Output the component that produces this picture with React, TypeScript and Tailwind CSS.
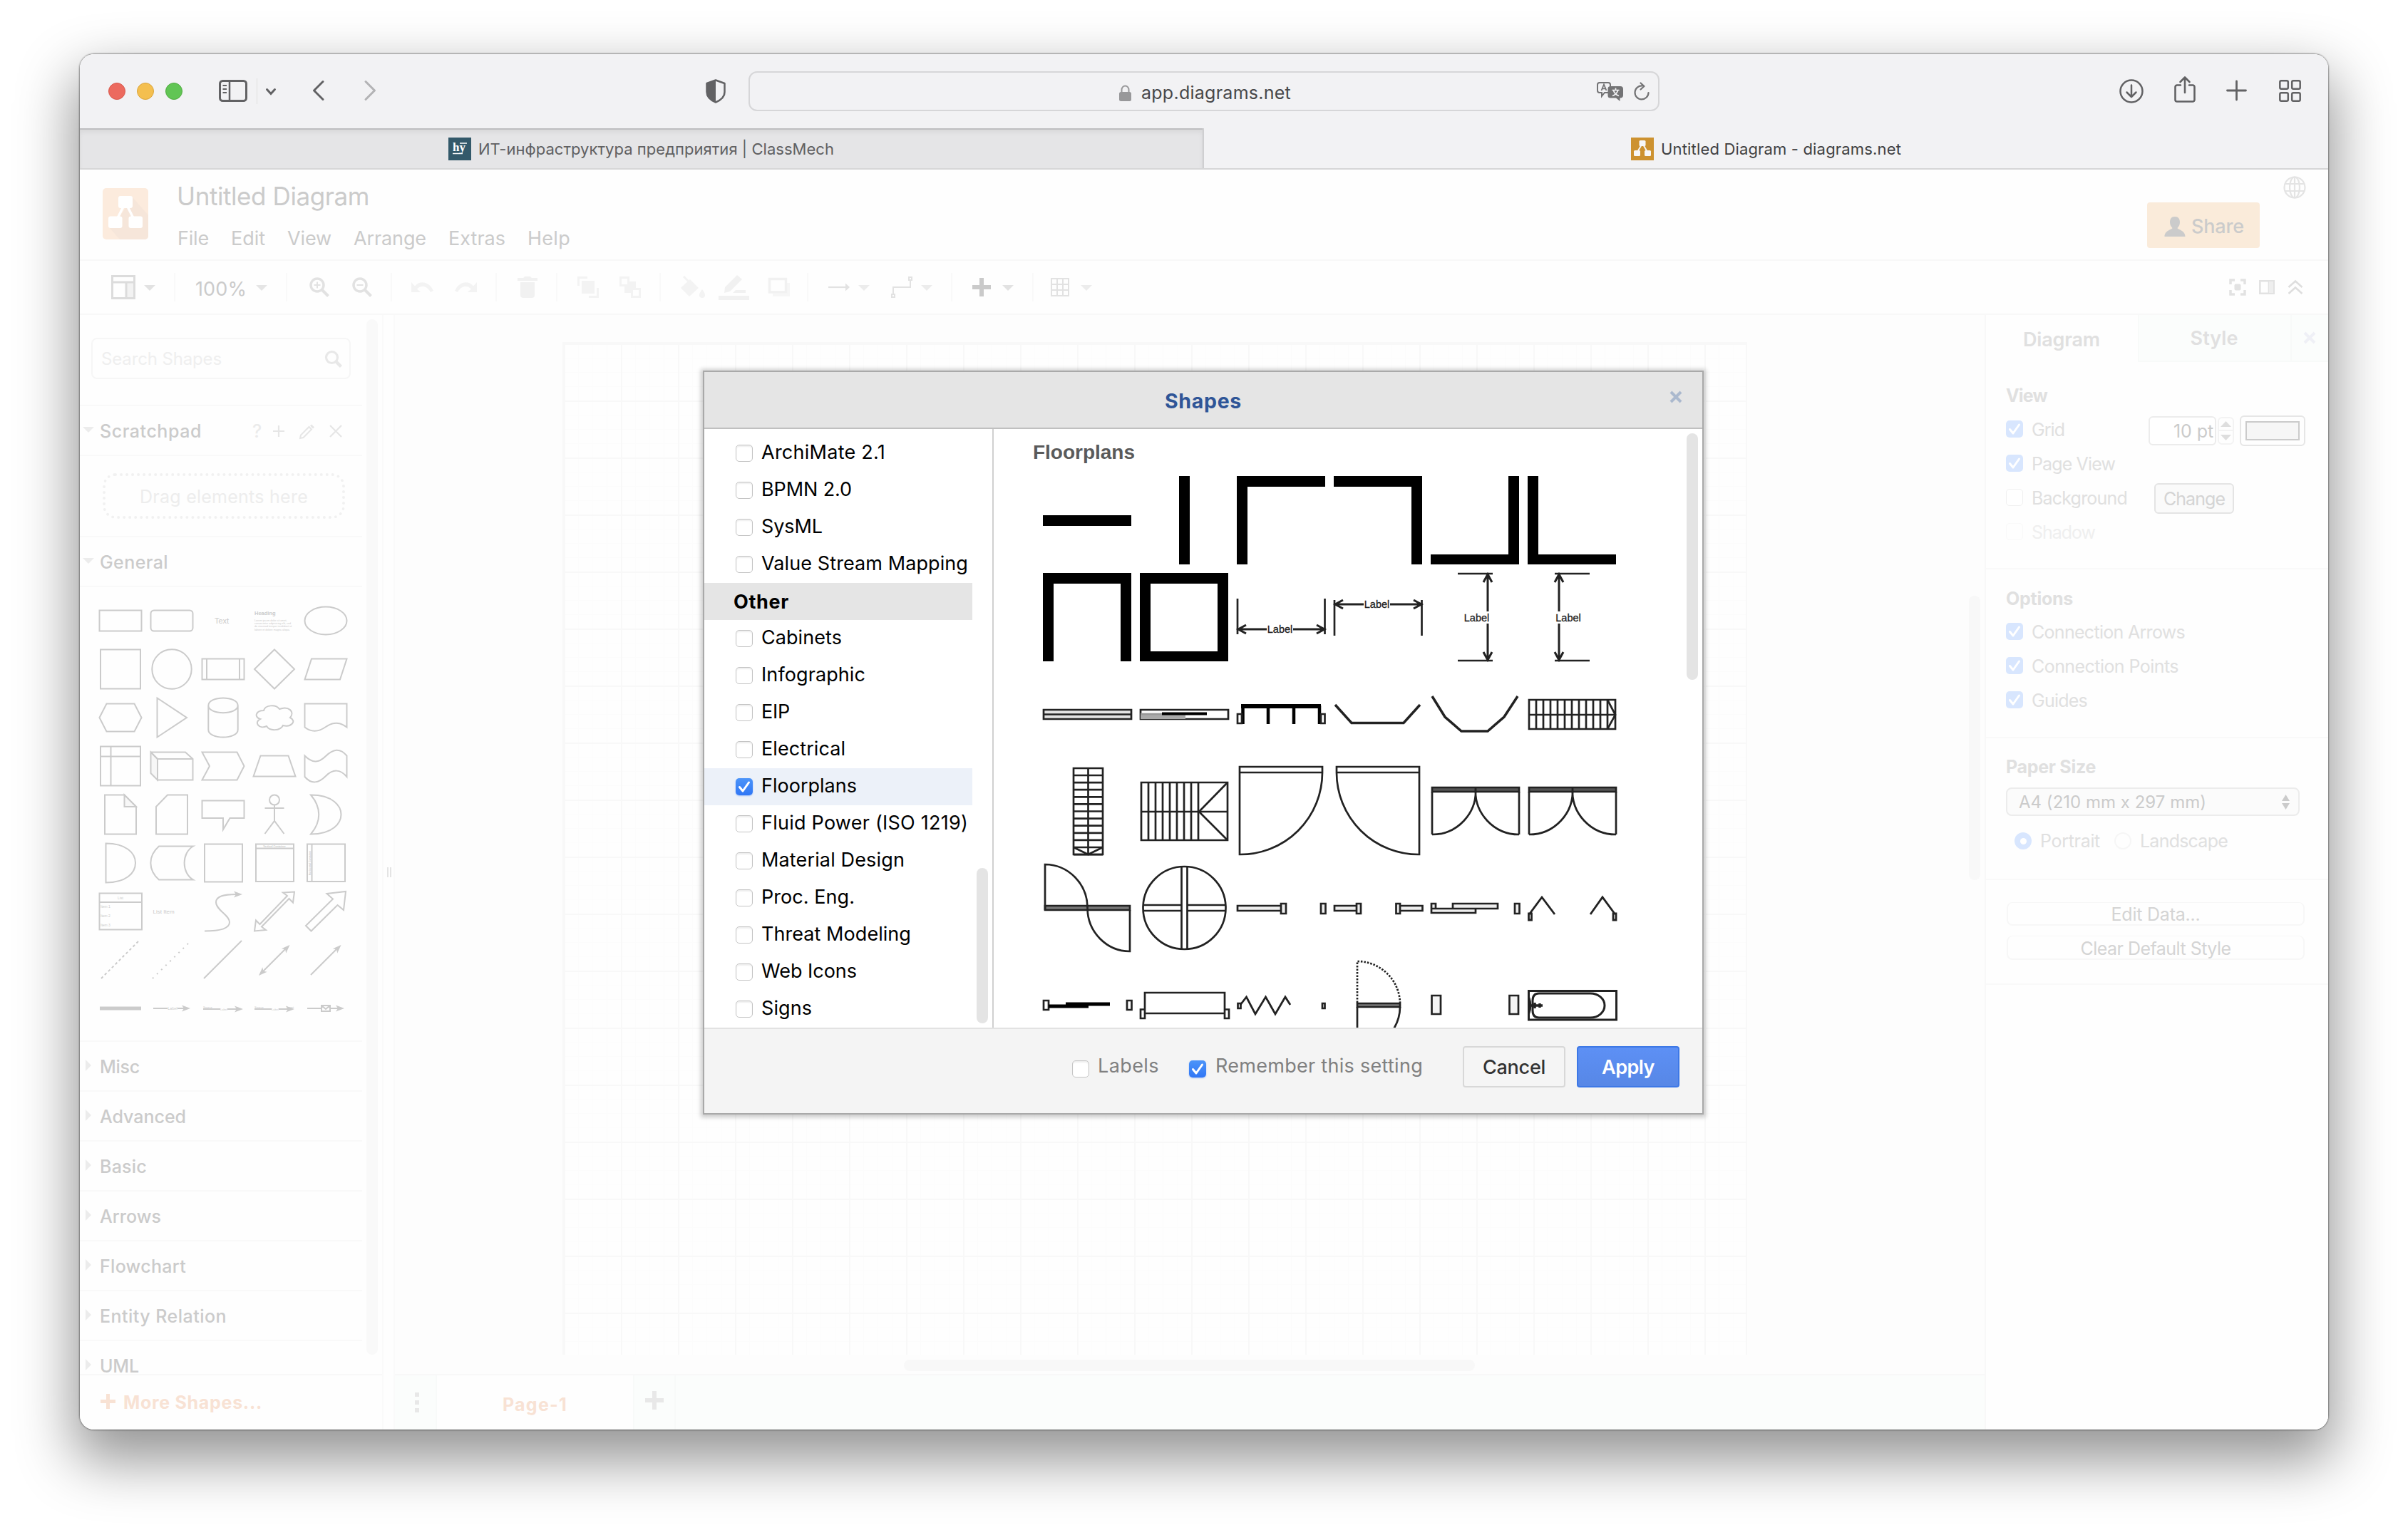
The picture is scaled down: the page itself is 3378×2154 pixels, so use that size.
import { useLayoutEffect, useRef, useState, type ReactNode } from "react";
import clsx from "clsx";

/* Text run whose tracking is adjusted so that it spans `w` pixels. */
function T({ w, className, children }: { w?: number; className?: string; children: string }) {
  const ref = useRef<HTMLSpanElement>(null);
  const [ls, setLs] = useState<number | undefined>(undefined);
  useLayoutEffect(() => {
    if (!ref.current || !w) return;
    const natural = ref.current.getBoundingClientRect().width;
    setLs((w - natural) / children.length);
  }, [w, children]);
  return (
    <span
      ref={ref}
      className={clsx("inline-block whitespace-pre", className)}
      style={ls === undefined ? undefined : { letterSpacing: `${ls}px` }}
    >
      {children}
    </span>
  );
}

function Ico({ w, h, className, children }: { w: number; h: number; className?: string; children: ReactNode }) {
  return (
    <svg
      width={w}
      height={h}
      viewBox={`0 0 ${w} ${h}`}
      className={clsx("shrink-0 overflow-visible", className)}
      fill="none"
      stroke="currentColor"
    >
      {children}
    </svg>
  );
}

function Check({ on, faded, dim, className }: { on?: boolean; faded?: boolean; dim?: boolean; className?: string }) {
  return (
    <span
      className={clsx(
        "flex size-6 shrink-0 items-center justify-center rounded-[5px]",
        on && !faded && "bg-linear-to-b from-[#4c94f9] to-[#3076f5] shadow-[0_1px_2px_rgba(48,118,245,0.4)]",
        on && faded && "bg-[#d8e6fe]",
        !on && !faded && "border border-[#c4c4c4] bg-white shadow-[inset_0_2px_2px_rgba(0,0,0,0.07)]",
        !on && faded && !dim && "border border-[#f0f0f0] bg-white",
        !on && faded && dim && "border border-[#f9f9f9]",
        className,
      )}
    >
      {on && (
        <Ico w={24} h={24} className="text-white">
          <path d="M5.5 12.5 L10 18 L18.5 6" strokeWidth="3" strokeLinecap="round" strokeLinejoin="round" />
        </Ico>
      )}
    </span>
  );
}

/* ---------- Safari chrome ---------- */

function BrowserToolbar() {
  return (
    <div className="flex h-[104px] shrink-0 items-center bg-[#f2f2f4] text-[#626264]">
      <div className="ml-10 flex gap-4">
        <span className="size-6 rounded-full border border-[#d8584b] bg-[#ec6a5e]" />
        <span className="size-6 rounded-full border border-[#dba53c] bg-[#f4bf4f]" />
        <span className="size-6 rounded-full border border-[#51ab41] bg-[#61c554]" />
      </div>
      <Ico w={40} h={31} className="mb-0.5 ml-[51px]">
        <rect x="1.5" y="1.5" width="37" height="28" rx="4" strokeWidth="3" />
        <path d="M15 2V29" strokeWidth="2.5" />
        <path d="M5.5 8H11M5.5 13H11M5.5 18H11" strokeWidth="2" />
      </Ico>
      <span className="ml-[13px] h-9 w-px bg-[#dededf]" />
      <Ico w={14} h={9} className="ml-3">
        <path d="M1.5 1.5L7 7.5L12.5 1.5" strokeWidth="3" strokeLinecap="round" />
      </Ico>
      <Ico w={17} h={28} className="mb-0.5 ml-[51px]">
        <path d="M15 1.5L2.5 14L15 26.5" strokeWidth="3" strokeLinecap="round" strokeLinejoin="round" />
      </Ico>
      <Ico w={17} h={28} className="mb-0.5 ml-[56px] text-[#b3b3b5]">
        <path d="M2 1.5L14.5 14L2 26.5" strokeWidth="3" strokeLinecap="round" strokeLinejoin="round" />
      </Ico>
      <Ico w={28} h={34} className="ml-[462px]">
        <path d="M14 1.5L26.5 6V18C26.5 25 20 30 14 32.5C8 30 1.5 25 1.5 18V6Z" strokeWidth="2.5" strokeLinejoin="round" />
        <path d="M14 1V33C7 30 1 25 1 18V6Z" fill="currentColor" stroke="none" />
      </Ico>
      <div className="ml-8 flex h-14 w-[1278px] items-center rounded-xl border-2 border-[#d6d6d8]">
        <Ico w={17} h={23} className="ml-[518px] mt-1 text-[#98989a]">
          <rect x="0" y="10" width="17" height="13" rx="2.5" fill="currentColor" stroke="none" />
          <path d="M3.5 11V7a5 5.5 0 0 1 10 0v4" strokeWidth="2" />
        </Ico>
        <div className="ml-[14px] w-[209px] pt-[3px] text-[25px] leading-8 text-[#48484a]">
          <T w={210}>app.diagrams.net</T>
        </div>
        <Ico w={37} h={27} className="ml-[430px] text-[#737375]">
          <path d="M4 1H16a3 3 0 0 1 3 3v2M16 15H11l-4 5v-5H4a3 3 0 0 1-3-3V4a3 3 0 0 1 3-3" strokeWidth="2" />
          <path d="M6.5 12L10 3.5L13.5 12M7.8 9.3H12.2" strokeWidth="1.8" />
          <path d="M19 6H33a4 4 0 0 1 4 4v8.500a4 4 0 0 1-4 4H32.500V27L27 22.500H19a3.500 3.500 0 0 1-3.500-3.500V9.500A3.500 3.500 0 0 1 19 6Z" fill="currentColor" stroke="none" />
          <path d="M26.500 8.500V11M21.500 11.500H31.500M23.500 12C24.500 15.500 27 18 31 19.500M29.500 12C28.500 15.500 26 18 22 19.500" stroke="#f2f2f4" strokeWidth="1.700" />
        </Ico>
        <Ico w={22} h={25} className="ml-[15px] text-[#737375]">
          <path d="M12 4.500A9.500 9.500 0 1 0 20.500 14" strokeWidth="2.200" strokeLinecap="round" />
          <path d="M9.500 0.500L14.500 5L9.500 9.500" strokeWidth="2.200" strokeLinecap="round" strokeLinejoin="round" />
        </Ico>
      </div>
      <Ico w={34} h={34} className="ml-[645px]">
        <circle cx="17" cy="17" r="15.500" strokeWidth="2.500" />
        <path d="M17 8.500V24.500M10.500 18.500L17 25L23.500 18.500" strokeWidth="2.500" strokeLinecap="round" strokeLinejoin="round" />
      </Ico>
      <Ico w={30} h={37} className="mb-[5px] ml-[43px]">
        <path d="M9 12.500H4a2.500 2.500 0 0 0-2.500 2.500V33A2.500 2.500 0 0 0 4 35.500H26A2.500 2.500 0 0 0 28.500 33V15A2.500 2.500 0 0 0 26 12.500H21" strokeWidth="2.600" strokeLinecap="round" />
        <path d="M15 23V2M8.500 8L15 1.500L21.500 8" strokeWidth="2.600" strokeLinecap="round" strokeLinejoin="round" />
      </Ico>
      <Ico w={27} h={28} className="mb-0.5 ml-[44px]">
        <path d="M13.500 1V27M0.500 14H26.500" strokeWidth="2.800" strokeLinecap="round" />
      </Ico>
      <Ico w={31} h={31} className="mb-0.5 ml-[46px]">
        <g strokeWidth="2.500">
          <rect x="1.300" y="1.300" width="11.500" height="11.500" rx="2" />
          <rect x="18.200" y="1.300" width="11.500" height="11.500" rx="2" />
          <rect x="1.300" y="18.200" width="11.500" height="11.500" rx="2" />
          <rect x="18.200" y="18.200" width="11.500" height="11.500" rx="2" />
        </g>
      </Ico>
    </div>
  );
}

function TabBar() {
  return (
    <div className="flex h-[58px] shrink-0 border-b-2 border-[#d6d6d7] bg-[#f2f2f4] text-[22px]">
      <div className="flex w-[1577px] items-center border-r-2 border-[#cfcfd1] bg-[#e5e5e7] pl-[517px] pt-0.5 text-[#606062] shadow-[inset_0_2px_1px_#bdbdbf,inset_0_6px_6px_rgba(0,0,0,0.05)]">
        <span className="flex size-8 items-center justify-center bg-[#33596a]">
          <Ico w={32} h={32} className="text-white">
            <path d="M16 8H26M6 22.500H20" strokeWidth="1.600" />
            <text x="6" y="19" fontSize="17" fontWeight="700" fill="currentColor" stroke="none" fontFamily="Liberation Serif, serif">hy</text>
          </Ico>
        </span>
        <T w={499} className="ml-[10px]">ИТ-инфраструктура предприятия | ClassMech</T>
      </div>
      <div className="flex items-center pl-[599px] pt-0.5 text-[#3f3f41]">
        <Ico w={32} h={32}>
          <rect width="32" height="32" fill="#cd9230" stroke="none" />
          <path d="M16 8L8 22M16 8L24 22" stroke="#f4f4f4" strokeWidth="2" />
          <g fill="#f7f7f7" stroke="none">
            <rect x="11.500" y="4" width="9" height="8" rx="1.500" />
            <rect x="4" y="18" width="9" height="8" rx="1.500" />
            <rect x="19" y="18" width="9" height="8" rx="1.500" />
          </g>
        </Ico>
        <T w={337} className="ml-[10px]">Untitled Diagram - diagrams.net</T>
      </div>
    </div>
  );
}

/* ---------- diagrams.net header ---------- */

const menus: [string, number][] = [["File", 44], ["Edit", 48], ["View", 62], ["Arrange", 102], ["Extras", 80], ["Help", 60]];

function AppHeader() {
  return (
    <div className="flex h-[128px] shrink-0 border-b-2 border-[#f8f8f8] text-[#cbcbcb]">
      <Ico w={64} h={72} className="ml-8 mt-[26px]">
        <rect width="64" height="72" rx="5" fill="#fcebdd" stroke="none" />
        <path d="M42 13L64 38V67a5 5 0 0 1-5 5H24L10 56L24 40Z" fill="#f6e6da" stroke="none" />
        <path d="M32 20L18 48M32 20L46 48" stroke="#fff" strokeWidth="3.500" />
        <g fill="#fff" stroke="none">
          <rect x="22" y="11" width="20" height="17" rx="3" />
          <rect x="8" y="39.500" width="19.500" height="16.500" rx="3" />
          <rect x="36.500" y="39.500" width="19.500" height="16.500" rx="3" />
        </g>
      </Ico>
      <div className="ml-10 mt-[15px] flex-1">
        <div className="text-[35px] leading-[44px]"><T w={270}>Untitled Diagram</T></div>
        <div className="mt-[18px] flex gap-[31px] pl-px text-[27px] leading-10">
          {menus.map(([m, w]) => (
            <div key={m} className="shrink-0"><T w={w}>{m}</T></div>
          ))}
        </div>
      </div>
      <div className="mr-[33px] mt-[46px] flex h-16 w-[158px] items-center rounded-[4px] bg-[#faebda] pl-6 pt-[3px] text-[27px] font-medium">
        <Ico w={30} h={28}>
          <path d="M15 0c5 0 7 3.500 7 8 0 3-1.500 6-3.500 8 0 2 11 3 11 12H.5C.5 19 11.500 18 11.500 16 9.500 14 8 11 8 8 8 3.500 10 0 15 0Z" fill="currentColor" stroke="none" />
        </Ico>
        <T w={74} className="ml-[8px]">Share</T>
      </div>
      <Ico w={32} h={32} className="mr-[31px] mt-[9px] text-[#e4e4e4]">
        <g strokeWidth="2.200">
          <circle cx="16" cy="16" r="14.500" />
          <ellipse cx="16" cy="16" rx="7" ry="14.500" />
          <path d="M16 1.500V30.500M3 11H29M3 21H29" />
        </g>
      </Ico>
    </div>
  );
}

function Caret({ className }: { className?: string }) {
  return (
    <Ico w={16} h={8} className={clsx("mt-0.5", className)}>
      <path d="M0 0H16L8 8Z" fill="currentColor" stroke="none" />
    </Ico>
  );
}
const Sep = ({ className }: { className?: string }) => <span className={clsx("h-10 w-0.5 shrink-0 bg-[#f9f9f9]", className)} />;

function AppToolbar() {
  return (
    <div className="flex h-[76px] shrink-0 items-center border-b-2 border-[#f8f8f8] text-[#e2e2e2]">
      <Ico w={34} h={34} className="ml-11 text-[#dcdcdc]">
        <rect x="21" y="10" width="12" height="23" fill="#f2f2f2" stroke="none" />
        <path d="M1.500 1.500H32.500V32.500H1.500ZM1 10H33M21 10V33" strokeWidth="3" />
      </Ico>
      <Caret className="ml-3" />
      <Sep className="ml-[26px]" />
      <div className="ml-[28px] mt-[5px] text-[27px] text-[#cbcbcb]"><T w={72}>100%</T></div>
      <Caret className="ml-[13px] text-[#e5e5e5]" />
      <Sep className="ml-[26px]" />
      {[true, false].map((plus) => (
        <Ico key={String(plus)} w={28} h={28} className={plus ? "ml-[31px]" : "ml-8"}>
          <circle cx="11" cy="11" r="9" strokeWidth="3.500" />
          <path d="M17.500 17.500L26.500 26.500" strokeWidth="4" />
          <path d={plus ? "M11 6.500V15.500M6.500 11H15.500" : "M6.500 11H15.500"} strokeWidth="2" />
        </Ico>
      ))}
      <Sep className="ml-[26px]" />
      <Ico w={31} h={14} className="ml-[27px] text-[#f3f3f3]">
        <path d="M0 0V14H13L8 9.500C14 4 22 5 27 14L31 12C25 -1 12 -3 5 5.500Z" fill="currentColor" stroke="none" />
      </Ico>
      <Ico w={31} h={14} className="ml-[30px] text-[#f3f3f3]">
        <path d="M31 0V14H18L23 9.500C17 4 9 5 4 14L0 12C6 -1 19 -3 26 5.500Z" fill="currentColor" stroke="none" />
      </Ico>
      <Sep className="ml-[26px]" />
      <Ico w={28} h={30} className="ml-[29px] text-[#f1f1f1]">
        <path d="M0 2H8L10 0H18L20 2H28V6H0ZM4 8H24V26a4 4 0 0 1-4 4H8a4 4 0 0 1-4-4Z" fill="currentColor" stroke="none" />
      </Ico>
      <Sep className="ml-[26px]" />
      <Ico w={30} h={30} className="ml-7 text-[#f3f3f3]">
        <path d="M6 6H24V24H6Z" fill="currentColor" stroke="none" />
        <path d="M14 1.500H1.500V13M16 28.500H28.500V16" strokeWidth="3" />
      </Ico>
      <Ico w={30} h={30} className="ml-[29px] text-[#f3f3f3]">
        <path d="M14 7H23V16H14ZM7 13H16V23H7Z" fill="currentColor" stroke="none" />
        <path d="M1.500 1.500H12.500V12.500H1.500ZM17.500 17.500H28.500V28.500H17.500Z" strokeWidth="3" />
      </Ico>
      <Sep className="ml-[26px]" />
      <Ico w={34} h={30} className="ml-7 text-[#f3f3f3]">
        <path d="M13 4L25 16L12 28L0 16ZM30 18c3 4 4 6 4 8a4 4 0 0 1-8 0c0-2 1-4 4-8Z" fill="currentColor" stroke="none" />
        <path d="M4 0L15 11" strokeWidth="3" />
      </Ico>
      <Ico w={43} h={36} className="ml-[19px] text-[#f1f1f1]">
        <path d="M9 18L26 1L33 7L16 24L8 26ZM0 30H43V36H0ZM24 22H38V26H20Z" fill="currentColor" stroke="none" />
      </Ico>
      <Ico w={30} h={26} className="ml-[27px] text-[#f1f1f1]">
        <path d="M26 7V22H6V26H30V7Z" fill="#f6f6f6" stroke="none" />
        <path d="M1.500 1.500H24.500V20H1.500Z" strokeWidth="3.500" />
      </Ico>
      <Sep className="ml-6" />
      <Ico w={30} h={12} className="ml-[28px]">
        <path d="M0 6H26" strokeWidth="2.200" />
        <path d="M24 0.500L30 6L24 11.500Z" fill="currentColor" stroke="none" />
      </Ico>
      <Caret className="ml-3 text-[#ececec]" />
      <Ico w={30} h={30} className="ml-[30px]">
        <path d="M3 24V15H27V6" strokeWidth="2" />
        <path d="M1 25H5V29H1ZM25 1H29V5H25Z" strokeWidth="2" />
      </Ico>
      <Caret className="ml-3 text-[#ececec]" />
      <Sep className="ml-[26px]" />
      <Ico w={26} h={26} className="ml-[28px] text-[#cacaca]">
        <path d="M13 0V26M0 13H26" strokeWidth="6" />
      </Ico>
      <Caret className="ml-4" />
      <Sep className="ml-[26px]" />
      <Ico w={26} h={26} className="ml-6">
        <path d="M1 1H25V25H1ZM9 1V25M17 1V25M1 9H25M1 17H25" strokeWidth="2" />
      </Ico>
      <Caret className="ml-4 text-[#ececec]" />
      <div className="ml-auto mr-[35px] flex items-center gap-[18px]">
        <Ico w={24} h={24}>
          <path d="M2 8V2H8M16 2H22V8M22 16V22H16M8 22H2V16" strokeWidth="3.500" />
          <rect x="7.500" y="7.500" width="9" height="9" rx="2" fill="currentColor" stroke="none" />
        </Ico>
        <Ico w={22} h={20}>
          <path d="M1.300 1.300H20.700V18.700H1.300ZM14 1V19" strokeWidth="2.600" />
          <path d="M14 2H20V18H14Z" fill="#eee" stroke="none" />
        </Ico>
        <Ico w={22} h={20} className="text-[#dedede]">
          <path d="M1.500 10L11 1.500L20.500 10M1.500 19L11 10.500L20.500 19" strokeWidth="2.600" />
        </Ico>
      </div>
    </div>
  );
}

/* ---------- Sidebar ---------- */

const head = (x: number, y: number, deg: number) => (
  <path transform={`translate(${x} ${y}) rotate(${deg})`} d="M0 0L-12 -4.500L-9 0L-12 4.500Z" fill="currentColor" stroke="none" />
);
const Tx = ({ x, y, s, b, a, children }: { x: number; y: number; s: number; b?: boolean; a?: "middle"; children: string }) => (
  <text x={x} y={y} fontSize={s} fontWeight={b ? 700 : 400} textAnchor={a} fill="currentColor" stroke="none" fontFamily="Liberation Sans, sans-serif">
    {children}
  </text>
);

const general: ReactNode[] = [
  <rect x="-29.500" y="-14.500" width="59" height="29" />,
  <rect x="-29.500" y="-14.500" width="59" height="29" rx="4.500" />,
  <Tx x={-12} y={3.500} s={11}>Text</Tx>,
  <g><Tx x={-28} y={-8} s={7.500} b>Heading</Tx><Tx x={-28} y={1} s={3.700}>Lorem ipsum dolor sit amet,</Tx><Tx x={-28} y={5.200} s={3.700}>consectetur adipisicing elit, sed</Tx><Tx x={-28} y={9.400} s={3.700}>do eiusmod tempor incididunt ut</Tx><Tx x={-28} y={13.800} s={3.700}>labore et dolore magna aliqua.</Tx></g>,
  <ellipse rx="29.500" ry="19.500" />,
  <rect x="-28" y="-27.500" width="56" height="55" />,
  <circle r="27.700" />,
  <path d="M-29.500 -14.500H29.500V14.500H-29.500ZM-23 -14.500V14.500M23 -14.500V14.500" />,
  <path d="M0 -27.500L28 0L0 27.500L-28 0Z" />,
  <path d="M-29.500 14.500L-20 -14.500H29.500L20 14.500Z" />,
  <path d="M-29.500 0L-19.500 -19.500H19.500L29.500 0L19.500 19.500H-19.500Z" />,
  <path d="M-20.500 -27.500L21 0L-20.500 27.500Z" />,
  <path d="M-20.700 -17C-20.700 -31 20.700 -31 20.700 -17V17C20.700 31 -20.700 31 -20.700 17ZM-20.700 -17C-20.700 -3.500 20.700 -3.500 20.700 -17" />,
  <path d="M-15 -10C-26 -10 -29 -1 -20 2C-29 6 -22 17 -11 12C-7 19 8 19 12 11C23 14 32 5 22 0C29 -8 20 -17 7 -12C2 -19 -13 -18 -15 -10Z" />,
  <path d="M-29.500 -19.500H29.500V13.500C20 6 10 6 0 13S-20 21 -29.500 13.500Z" />,
  <path d="M-28 -27.500H28V27.500H-28ZM-13.500 -27.500V27.500M-28 -13.500H28" />,
  <g><path d="M-29.500 -19.500L-20 -10V19.500L-29.500 10Z" fill="#f7f7f7" /><path d="M-29.500 -19.500H19L29.500 -10V19.500H-20V-10H29.500M-20 -10L-29.500 -19.500" /></g>,
  <path d="M-29.500 -19.500H19.500L29.500 0L19.500 19.500H-29.500L-19 0Z" />,
  <path d="M-29.500 14.500L-19.500 -14.500H19.500L29.500 14.500Z" />,
  <path d="M-29.500 -14.500C-19 -4 -10 -4 0 -14S20 -26 29.500 -14.500V15C20 4 10 4 0 14S-20 26 -29.500 15Z" />,
  <g><path d="M-22 -27.500H5.500L22 -11V27.500H-22Z" /><path d="M5.500 -27.500V-11H22Z" fill="#f7f7f7" /></g>,
  <path d="M-6 -27.500H22V27.500H-22V-11Z" />,
  <path d="M-29.500 -19.500H29.500V5H9.500L0 21V5H-29.500Z" />,
  <path d="M-7 -20.500a7 7 0 1 0 14 0a7 7 0 1 0 -14 0M0 -13V9M-13.500 -9H13.500M-13.500 27L0 9L13.500 27" />,
  <path d="M-21 -27.500C10 -27.500 21.500 -12 21.500 0S10 27.500 -21 27.500C-6 10 -6 -10 -21 -27.500Z" />,
  <path d="M-20.500 -27.500C8 -27.500 21 -14 21 0S8 27.500 -20.500 27.500Z" />,
  <path d="M-18 -23.500H30C13.500 -14 13.500 14 30 23.500H-18C-33.500 10 -33.500 -10 -18 -23.500Z" />,
  <rect x="-26" y="-26.500" width="53" height="53" />,
  <g><path d="M-26 -26.500H27V26H-26ZM-26 -20.500H27" /><Tx x={0} y={-22} s={3.700} b a="middle">Vertical Container</Tx></g>,
  <g><path d="M-26 -26.500H27V26H-26ZM-19.500 -26.500V26" /><g transform="rotate(-90)"><Tx x={0} y={-21} s={3.500} b a="middle">Horizontal Container</Tx></g></g>,
  <g><path d="M-29.500 -25.500H30V25.500H-29.500ZM-29.500 -13H30" /><Tx x={0} y={-17} s={5} a="middle">List</Tx><Tx x={-28} y={-5} s={5}>Item 1</Tx><Tx x={-28} y={8} s={5}>Item 2</Tx><Tx x={-28} y={20.500} s={5}>Item 3</Tx></g>,
  <Tx x={-26.500} y={3} s={8}>List Item</Tx>,
  <g><path d="M-26 27.500C-2 27.500 9 23 9 15C9 5 -10 -2 -10 -13C-10 -22 2 -24 18 -24" />{head(27, -24, 0)}</g>,
  <path d="M28 -27.500L26 -12.500L20.500 -18L-18 21.500L-12 26L-28 27.500L-26 12.500L-20.500 18L18 -22L12 -26.500Z" />,
  <path d="M28 -28L25 -2L16.500 -9L-20.500 27.500L-28 20L10 -17.500L1.500 -25Z" />,
  <path d="M-27 26L26 -27" strokeDasharray="3.500 3.500" />,
  <path d="M-27 26L24 -24" strokeDasharray="2 6.500" />,
  <path d="M-27 26L26 -27" />,
  <g><path d="M-18 18L17 -17" />{head(21.500, -21, -45)}{head(-22, 22, 135)}</g>,
  <g><path d="M-21 21L17 -17" />{head(21.500, -21, -45)}</g>,
  <path d="M-29 0H29" strokeWidth="5" />,
  <g><path d="M-26 0H-6M8 0H20" />{head(26, 0, 0)}<Tx x={1} y={2} s={5.500} a="middle">Label</Tx></g>,
  <g><path d="M-28 1H-4M6 1H22" />{head(28, 1, 0)}<Tx x={-28} y={0} s={4}>Source</Tx><Tx x={1} y={3} s={4} a="middle">Label</Tx></g>,
  <g><path d="M-28 1H-4M6 1H22" />{head(28, 1, 0)}<Tx x={-28} y={0} s={4}>Source</Tx><Tx x={1} y={3} s={4} a="middle">Label</Tx><Tx x={16} y={0} s={4}>Target</Tx></g>,
  <g><path d="M-26 0H-6M6 0H20M-6 -4H6V4H-6ZM-6 -4L0 1L6 -4" />{head(26, 0, 0)}</g>,
];

const sections: [string, number][] = [["Misc", 56], ["Advanced", 121], ["Basic", 66], ["Arrows", 86], ["Flowchart", 121], ["Entity Relation", 178], ["UML", 55]];

function OpenTitle({ label, w, children }: { label: string; w: number; children?: ReactNode }) {
  return (
    <div className="flex h-[70px] shrink-0 items-center border-b-2 border-[#f9f9f9] pl-1 pt-0.5">
      <Ico w={16} h={8} className="mb-1 text-[#ececec]"><path d="M0 0H16L8 8Z" fill="currentColor" stroke="none" /></Ico>
      <T w={w} className="ml-[8px]">{label}</T>
      {children}
    </div>
  );
}

function Sidebar() {
  return (
    <div className="relative flex w-[426px] shrink-0 flex-col border-r-2 border-[#fafafa]">
      <div className="flex h-[1486px] flex-col text-[25px] font-medium text-[#cbcbcb]">
        <div className="flex w-[396px] flex-col">
          <div className="h-32 border-b-2 border-[#f9f9f9] pl-4 pt-8">
            <div className="flex h-[58px] w-[364px] items-center rounded-lg border-2 border-[#f6f6f6] pl-[12px] pt-px text-[24px] font-normal text-[#efefef]">
              <T w={169}>Search Shapes</T>
              <Ico w={24} h={24} className="ml-auto mr-2.5 text-[#e8e8e8]">
                <circle cx="9.500" cy="9.500" r="8" strokeWidth="3.200" />
                <path d="M15 15L22.500 22.500" strokeWidth="4.500" />
              </Ico>
            </div>
          </div>
          <OpenTitle label="Scratchpad" w={143}>
            <div className="ml-[71px] flex items-center text-[#ebebeb]">
              <T w={13}>?</T>
              <Ico w={16} h={16} className="ml-[16px] text-[#e6e6e6]"><path d="M8 0V16M0 8H16" strokeWidth="2.200" /></Ico>
              <Ico w={21} h={21} className="ml-[21px] text-[#e6e6e6]">
                <path d="M1 20L2 15.500L13.500 4L17 7.500L5.500 19Z" strokeWidth="2" />
                <path d="M15 2.500L17 .5L21 4.500L19 6.500Z" fill="currentColor" stroke="none" />
              </Ico>
              <Ico w={16} h={16} className="ml-[22px] text-[#e6e6e6]"><path d="M0 0L16 16M16 0L0 16" strokeWidth="2.200" /></Ico>
            </div>
          </OpenTitle>
          <div className="h-[114px] border-b-2 border-[#f9f9f9] pl-8 pt-6">
            <div className="flex h-16 w-[340px] items-center justify-center rounded-[18px] border-4 border-dotted border-[#f1f1f1] pt-0.5 font-normal text-[#ededed]">
              <T w={236}>Drag elements here</T>
            </div>
          </div>
          <OpenTitle label="General" w={96} />
          <div className="h-[638px] border-b-2 border-[#f9f9f9] pl-[21px] pt-[13px]">
            <div className="grid w-[360px] grid-cols-5">
              {general.map((g, i) => (
                <svg key={i} width="72" height="68" viewBox="-36 -34 72 68" fill="none" stroke="currentColor" strokeWidth="2" className="overflow-visible">
                  {g}
                </svg>
              ))}
            </div>
          </div>
          {sections.map(([s, w]) => (
            <div
              key={s}
              className={clsx(
                "flex shrink-0 items-center pl-2 leading-[20px]",
                s === "UML" ? "h-[46px] pt-[24px]" : "h-[70px] border-b-2 border-[#f9f9f9] pt-0.5",
              )}
            >
              <Ico w={8} h={16} className="mb-1 text-[#ececec]"><path d="M0 0L8 8L0 16Z" fill="currentColor" stroke="none" /></Ico>
              <T w={w} className="ml-[12px]">{s}</T>
            </div>
          ))}
        </div>
      </div>
      <span className="absolute right-1.5 top-1.5 h-[1453px] w-4 rounded-full bg-[#f9f9f9]" />
      <div className="flex flex-1 items-center border-t-2 border-[#f8f8f8] pl-[29px] pt-px text-[25px] font-bold text-[#f8e2d4]">
        <Ico w={21} h={21} className="mb-1"><path d="M10.500 0V21M0 10.500H21" strokeWidth="5" /></Ico>
        <T w={195} className="ml-[11px]">More Shapes...</T>
      </div>
    </div>
  );
}

/* ---------- Canvas ---------- */

function Canvas() {
  return (
    <div className="relative flex w-[2230px] shrink-0 flex-col">
      <div className="h-[1486px] bg-[#fdfdfd] pl-[235px] pt-[38px]">
        <div className="h-[1421px] w-[1662px] border-x-2 border-t-2 border-[#f8f8f8] bg-[#fefefe] bg-[linear-gradient(90deg,#f8f8f8_2px,transparent_2px),linear-gradient(#f8f8f8_2px,transparent_2px),linear-gradient(90deg,#fcfcfc_1px,transparent_1px),linear-gradient(#fcfcfc_1px,transparent_1px)] bg-[length:80px_80px,80px_80px,20px_20px,20px_20px]" />
      </div>
      <span className="absolute left-[714px] top-[1466px] h-4 w-[801px] rounded-full bg-[#f8f8f8]" />
      <span className="absolute right-1.5 top-[394px] h-[399px] w-4 rounded-full bg-[#f8f8f8]" />
      <div className="flex flex-1 border-t-2 border-[#f8f8f8] bg-[#fbfdfc]">
        <div className="flex w-[59px] items-center justify-center border-r-2 border-[#f8faf9] pl-[4px]">
          <Ico w={6} h={28} className="text-[#e8e8e8]">
            <path d="M0 0H6V6H0ZM0 11H6V17H0ZM0 22H6V28H0Z" fill="currentColor" stroke="none" />
          </Ico>
        </div>
        <div className="flex w-[275px] items-center bg-[#fefefe] pl-[92px] pt-1.5 text-[25px] font-bold text-[#f8e2d4]">
          <T w={91}>Page-1</T>
        </div>
        <div className="flex w-[60px] items-center justify-center border-x-2 border-[#f8faf9] pb-1.5 text-[#e8e8e8]">
          <Ico w={26} h={26}><path d="M13 0V26M0 13H26" strokeWidth="6" /></Ico>
        </div>
      </div>
    </div>
  );
}

/* ---------- Format panel ---------- */

function Opt({ label, w, on, dim, children }: { label: string; w: number; on?: boolean; dim?: boolean; children?: ReactNode }) {
  return (
    <div className={clsx("flex h-12 items-center", dim && "text-[#efefef]")}>
      <Check faded on={on} dim={dim} />
      <div className="ml-3 shrink-0 pt-0.5"><T w={w}>{label}</T></div>
      {children}
    </div>
  );
}

function FormatPanel() {
  return (
    <div className="flex flex-1 flex-col border-l-2 border-[#f8f8f8] bg-[#fefefe] text-[25px] text-[#e0e0e0]">
      <div className="flex h-[66px] shrink-0 text-[27px] font-semibold">
        <div className="flex w-[213px] items-center pl-[52px] pt-[3px]"><T w={108}>Diagram</T></div>
        <div className="flex w-[214px] items-center justify-center border-b-2 border-l-2 border-[#f8faf9] bg-[#fbfdfc] pr-0.5 pt-px"><T w={67}>Style</T></div>
        <div className="flex flex-1 items-center justify-center border-b-2 border-l-2 border-[#f8faf9] bg-[#fbfdfc] pr-0.5 text-[#eff0f6]">
          <Ico w={16} h={16}><path d="M1 1L15 15M15 1L1 15" strokeWidth="4" /></Ico>
        </div>
      </div>
      <div className="flex h-[291px] shrink-0 flex-col border-b-2 border-[#f9f9f9] pl-7 pt-[32px]">
        <div className="h-[38px] font-bold leading-[31px]"><T w={58}>View</T></div>
        <Opt label="Grid" w={46} on>
          <div className="ml-[118px] mt-1 flex h-[41px] w-[95px] items-center justify-end rounded-md border-2 border-[#ececec] bg-white pr-0.5 pt-0.5 text-[#cbcbcb]">
            <T w={56}>10 pt</T>
          </div>
          <div className="ml-0.5 mt-1 flex h-[39px] w-[23px] flex-col items-center justify-between rounded-md border-2 border-[#f3f3f3] py-1 text-[#dedede]">
            <Ico w={15} h={8}><path d="M0 8H15L7.500 0Z" fill="currentColor" stroke="none" /></Ico>
            <span className="h-0.5 w-full bg-[#f3f3f3]" />
            <Ico w={15} h={8}><path d="M0 0H15L7.500 8Z" fill="currentColor" stroke="none" /></Ico>
          </div>
          <div className="ml-2 mt-1 flex h-[43px] w-[92px] items-center justify-center rounded-md border-2 border-[#e6e6e6]">
            <span className="h-[27px] w-[76px] border-2 border-[#cbcbcb] bg-[#f6f6f6]" />
          </div>
        </Opt>
        <Opt label="Page View" w={117} on />
        <Opt label="Background" w={134}>
          <div className="ml-[38px] mt-0.5 flex h-[43px] w-[112px] items-center justify-center rounded-md border-2 border-[#e4e4e4] bg-[#fafafa] pt-0.5 text-[#d4d4d4]">
            <T w={86}>Change</T>
          </div>
        </Opt>
        <Opt label="Shadow" w={89} dim />
      </div>
      <div className="flex h-[237px] shrink-0 flex-col border-b-2 border-[#f9f9f9] pl-7 pt-[26px]">
        <div className="h-[37px] font-bold leading-[31px]"><T w={94}>Options</T></div>
        <Opt label="Connection Arrows" w={215} on />
        <Opt label="Connection Points" w={206} on />
        <Opt label="Guides" w={78} on />
      </div>
      <div className="flex h-[199px] shrink-0 flex-col border-b-2 border-[#f9f9f9] pl-7 pt-[25px]">
        <div className="h-[44px] font-bold leading-[31px]"><T w={126}>Paper Size</T></div>
        <div className="flex h-10 w-[412px] items-center rounded-lg border-2 border-[#ececec] bg-[#fbfbfb] pl-4 pt-px text-[24px] text-[#cbcbcb]">
          <T w={263}>A4 (210 mm x 297 mm)</T>
          <Ico w={11} h={21} className="ml-auto mr-3"><path d="M0 9H11L5.500 0ZM0 12H11L5.500 21Z" fill="currentColor" stroke="none" /></Ico>
        </div>
        <div className="mt-[23px] flex h-6 items-center pl-3">
          <span className="flex size-6 items-center justify-center rounded-full bg-[#d8e6fe]"><span className="size-[9px] rounded-full bg-white" /></span>
          <div className="ml-[12px] w-[84px] shrink-0"><T w={84}>Portrait</T></div>
          <span className="ml-5 size-6 rounded-full border-2 border-[#f6f6f6]" />
          <div className="ml-[12px] shrink-0"><T w={123}>Landscape</T></div>
        </div>
      </div>
      <div className="flex h-[147px] shrink-0 flex-col gap-3.5 border-b-2 border-[#f9f9f9] pl-[29px] pt-[31px] text-[#d4d4d4]">
        <div className="flex h-[33px] w-[418px] items-center justify-center rounded-lg border-2 border-t border-[#f7f7f7] pt-[3px]"><T w={125}>Edit Data...</T></div>
        <div className="flex h-[34px] w-[418px] items-center justify-center rounded-lg border-2 border-t border-[#f7f7f7] pt-[3px]"><T w={211}>Clear Default Style</T></div>
      </div>
    </div>
  );
}

/* ---------- Shapes dialog ---------- */

const libs: [string, number][] = [
  ["ArchiMate 2.1", 174], ["BPMN 2.0", 127], ["SysML", 86], ["Value Stream Mapping", 290], ["Other", 78],
  ["Cabinets", 113], ["Infographic", 146], ["EIP", 40], ["Electrical", 118], ["Floorplans", 134],
  ["Fluid Power (ISO 1219)", 290], ["Material Design", 201], ["Proc. Eng.", 131], ["Threat Modeling", 210],
  ["Web Icons", 134], ["Signs", 71],
];

const K = "#000";
const range = (n: number, from: number, step: number) => Array.from({ length: n }, (_, i) => from + i * step);
const Dim = ({ x, y }: { x: number; y: number }) => (
  <text x={x} y={y + 5} fontSize="14.500" textAnchor="middle" fill="#222" stroke="#222" strokeWidth="0.300" fontFamily="Liberation Sans, sans-serif">Label</text>
);
const doubleDoor = (
  <g><path d="M2 29H124V35H2Z" fill="#555" /><path d="M2 35V95M124 35V95M2 95A61 61 0 0 0 63 30A61 61 0 0 0 124 95" /></g>
);

const floor: ReactNode[] = [
  <path d="M0 55H124V70H0Z" fill={K} stroke="none" />,
  <path d="M55 0H70V124H55Z" fill={K} stroke="none" />,
  <path d="M0 0H124V15H15V124H0Z" fill={K} stroke="none" />,
  <path d="M0 0H124V124H109V15H0Z" fill={K} stroke="none" />,
  <path d="M109 0H124V124H0V110H109Z" fill={K} stroke="none" />,
  <path d="M0 0H15V110H124V124H0Z" fill={K} stroke="none" />,

  <path d="M0 0H124V124H109V15H15V124H0Z" fill={K} stroke="none" />,
  <path d="M0 0H124V124H0ZM15 15V110H109V15Z" fill={K} fillRule="evenodd" stroke="none" />,
  <g><path d="M1 36V86M123.500 36V86" /><path d="M1 79H42M79 79H123M13 73L2 79L13 85M112 73L123 79L112 85" strokeWidth="3" /><Dim x={60.500} y={79} /></g>,
  <g><path d="M1 38V88M123.500 38V88" /><path d="M1 44H42M79 44H123M13 38L2 44L13 50M112 38L123 44L112 50" strokeWidth="3" /><Dim x={60.500} y={44} /></g>,
  <g><path d="M38 1H87M38 123H87" /><path d="M80 2V54M80 71V122M74 13L80 2L86 13M74 111L80 122L86 111" strokeWidth="3" /><Dim x={64.500} y={63} /></g>,
  <g><path d="M38 1H87M38 123H87" /><path d="M44 2V54M44 71V122M38 13L44 2L50 13M38 111L44 122L50 111" strokeWidth="3" /><Dim x={57} y={63} /></g>,

  <g><path d="M1 56H124V69H1Z" fill="#e4e4e4" /><path d="M1 62.500H124" /></g>,
  <g><path d="M1 56H124V69H1Z" /><path d="M1 63H64V69H1Z" fill="#aaa" stroke="none" /><path d="M1 62H31" stroke="#999" /><path d="M31 61.500H94" strokeWidth="4" stroke={K} /></g>,
  <g><path d="M6 48H118V54H6Z" fill={K} stroke="none" /><path d="M8.500 50V76M116 50V76M44 50V76M80 50V76" strokeWidth="4.500" stroke={K} /><path d="M1 62H7V75H1ZM118 62H123.500V75H118Z" /></g>,
  <path d="M2 49L25 74.500H98L121 49" strokeWidth="3.500" />,
  <path d="M2 37L20 66L43 86H80L103 66L122 37" strokeWidth="3.500" />,
  <g><path d="M2 42H123V83H2ZM2 63H123" />{range(11, 12, 10).map((x) => <path key={x} d={`M${x} 42V83`} />)}<path d="M112 42L123 63L112 83" /></g>,

  <g><path d="M43 2H84V123H43ZM63.500 2V123" />{range(12, 12, 10.100).map((y) => <path key={y} d={`M43 ${y}H84`} />)}<path d="M43 113L63.500 123L84 113" /></g>,
  <g><path d="M2 22H123V103H2ZM2 63H123" />{range(8, 12, 10).map((x) => <path key={x} d={`M${x} 22V103`} />)}<path d="M122 23L83 63L122 102" /></g>,
  <path d="M4 0H120V8H4ZM4 8V123A115 115 0 0 0 120 8" />,
  <path d="M4 0H120V8H4ZM120 8V123A115 115 0 0 1 4 8" />,
  doubleDoor,
  doubleDoor,

  <g><path d="M3 59H122V65H3Z" fill="#777" /><path d="M3 65V1A60 61 0 0 1 62.500 62A60 61 0 0 0 122 123V65" /></g>,
  <g><circle cx="62.500" cy="62" r="58" /><path d="M58.500 4V120M66.500 4V120M4.500 58H58M67 58H120.500M4.500 66H58M67 66H120.500" /></g>,
  <path d="M1 59H62V66H1ZM62 56H69V70H62ZM118 56H124.500V70H118Z" fill="#eee" />,
  <path d="M1 59H32V66H1ZM32 56H38V70H32ZM87.500 56H93V70H87.500ZM93 59H124.500V66H93Z" fill="#eee" />,
  <path d="M1 56H7V63H1ZM1 63H63V69H1ZM31 56H94V63H31ZM118 56H124.500V70H118Z" fill="#eee" />,
  <path d="M1.500 70H5.500V79H1.500ZM3 70L20 47L38 71M88 71L105 47L122 70M120 70H124V79H120Z" strokeWidth="2.800" />,

  <g><path d="M1 56H8V69H1ZM118 56H124.500V69H118Z" /><path d="M8 64H64M32 61H94" strokeWidth="5" stroke={K} /></g>,
  <path d="M7 45H119V74H7ZM1 68.500H7V81H1ZM119 68.500H125V81H119Z" />,
  <g><path d="M1.500 60H5.500V67H1.500ZM120 60H123.500V67H120Z" /><path d="M5 62L13.500 51L26 75L40.500 51L54 75L68 51L75 62" strokeWidth="2.800" /></g>,
  <g><path d="M33 59V1A60 60 0 0 1 93 59" strokeDasharray="2.500 2" /><path d="M33 60H93V65H33Z" fill="#777" /><path d="M33 65V124A60 60 0 0 0 93 65" /></g>,
  <path d="M1.500 49H14V75H1.500ZM110.500 49H123V75H110.500Z" fill="#f4f4f4" />,
  <g><path d="M1.500 42.500H124.500V83H1.500Z" strokeWidth="3" /><path d="M16 46H88A20 17 0 0 1 88 80H16Q7 80 7 70V56Q7 46 16 46Z" strokeWidth="3" /><path d="M2 63H21M10 59V67M17 60V66" strokeWidth="3.500" /><path d="M2 52Q6 63 2 74" /></g>,
];

function ShapesDialog() {
  return (
    <div className="absolute left-[874px] top-[444px] flex h-[1044px] w-[1404px] flex-col border-2 border-[#a9a9a9] bg-white shadow-[0_1px_6px_3px_rgba(0,0,0,0.2)]">
      <div className="relative flex h-20 shrink-0 items-center justify-center border-b-2 border-[#c0c0c0] bg-[#e5e5e5] pt-[5px] text-[28.500px] font-bold text-[#2f5597]">
        <T w={108}>Shapes</T>
        <Ico w={18} h={18} className="absolute right-[28px] top-[26px] text-[#abb9ce]">
          <path d="M2 2L16 16M16 2L2 16" strokeWidth="4" />
        </Ico>
      </div>
      <div className="flex h-[840px] shrink-0 overflow-hidden">
        <div className="relative w-[406px] shrink-0 border-r-2 border-[#d0d0d0] pt-2 text-[27px] text-black">
          {libs.map(([l, w]) =>
            l === "Other" ? (
              <div key={l} className="flex h-[52px] w-[376px] items-center bg-[#e5e5e5] pl-[41px] font-bold"><T w={w}>{l}</T></div>
            ) : (
              <div key={l} className={clsx("flex h-[52px] w-[376px] items-center pl-11", l === "Floorplans" && "bg-[#ecf1f9]")}>
                <Check on={l === "Floorplans"} />
                <T w={w} className="mb-1 ml-[12px] shrink-0">{l}</T>
              </div>
            ),
          )}
          <span className="absolute right-1.5 top-[616px] h-[218px] w-4 rounded-full bg-[#e4e4e4]" />
        </div>
        <div className="relative flex-1 overflow-hidden">
          <div className="flex h-[66px] items-center pl-[55px] font-['Liberation_Sans'] text-[28px] font-bold text-[#5a5a5a]">
            <T w={143}>Floorplans</T>
          </div>
          <div className="ml-[69px] grid w-[816px] grid-cols-6 gap-y-3">
            {floor.map((s, i) => (
              <svg key={i} width="124" height="124" viewBox="0 0 124 124" fill="none" stroke="#222" strokeWidth="2.700" className="overflow-visible">
                {s}
              </svg>
            ))}
          </div>
          <span className="absolute right-1.5 top-1.5 h-[346px] w-4 rounded-full bg-[#e4e4e4]" />
        </div>
      </div>
      <div className="flex flex-1 items-start border-t-2 border-[#e2e2e2] bg-[#f4f4f4] pt-6 text-[27px] text-[#808080]">
        <Check className="ml-[516px] mt-5" />
        <div className="ml-[12px] mt-2 w-[85px] leading-10"><T w={86}>Labels</T></div>
        <Check on className="ml-[43px] mt-5" />
        <div className="ml-[13px] mt-2 w-[290px] leading-10"><T w={291}>Remember this setting</T></div>
        <div className="ml-[57px] flex h-[58px] w-[144px] items-center justify-center rounded-[4px] border-2 border-[#d8d8d8] bg-[#f5f5f5] font-medium text-[#333]"><T w={88}>Cancel</T></div>
        <div className="ml-[16px] flex h-[58px] w-[144px] items-center justify-center rounded-[4px] border-2 border-[#3d78e6] bg-linear-to-b from-[#5d90f5] to-[#5787e6] font-semibold text-white"><T w={74}>Apply</T></div>
      </div>
    </div>
  );
}

export default function App() {
  return (
    <div className="h-[2154px] w-[3378px] overflow-hidden bg-white pl-[112px] pt-[76px] font-['Inter',sans-serif] leading-none">
      <div className="w-[3154px] rounded-[20px] shadow-[0_0_2px_1px_rgba(0,0,0,0.4),0_36px_80px_8px_rgba(0,0,0,0.42)]">
        <div className="relative flex h-[1930px] w-[3154px] flex-col overflow-hidden rounded-[20px] bg-[#fefefe]">
          <BrowserToolbar />
          <TabBar />
          <AppHeader />
          <AppToolbar />
          <div className="flex flex-1">
            <Sidebar />
            <div className="flex w-[16px] shrink-0 items-center justify-center border-r-2 border-[#fafafa] pl-0.5">
              <span className="h-3.5 w-1.5 border-x-2 border-[#e4e4e4]" />
            </div>
            <Canvas />
            <FormatPanel />
          </div>
          <ShapesDialog />
        </div>
      </div>
    </div>
  );
}
